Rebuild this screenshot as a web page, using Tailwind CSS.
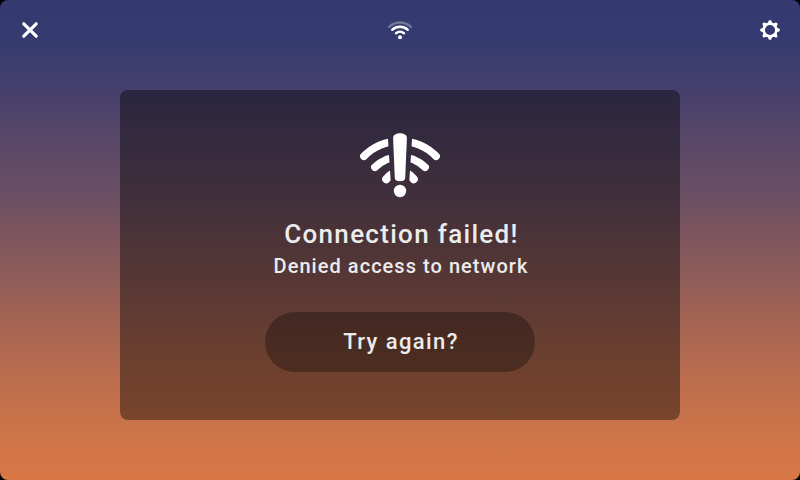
<!DOCTYPE html>
<html lang="en">
<head>
<meta charset="utf-8">
<title>Connection failed</title>
<script src="https://cdn.jsdelivr.net/npm/@tailwindcss/browser@4"></script>
</head>
<body class="bg-black">
<main class="flex h-[480px] w-[800px] flex-col overflow-hidden rounded-[8px] bg-[linear-gradient(#343a70_0px,#353b70_40px,#443f6c_85px,#5a4868_145px,#6b4f64_195px,#7f575e_240px,#965f58_290px,#aa6752_335px,#be6e4d_385px,#cb7449_430px,#d97746_480px)] font-['Roboto','Liberation_Sans',sans-serif] text-[#ececec]">
  <header class="flex h-[60px] items-center justify-between px-[15px]">
    <button aria-label="Close" class="size-[30px]">
      <svg viewBox="0 0 30 30" class="size-[30px]" fill="none" stroke="white" stroke-width="3.2" stroke-linecap="round"><path d="M8.8 8.8 21.2 21.2M21.2 8.8 8.8 21.2"/></svg>
    </button>
    <svg viewBox="0 0 30 30" class="size-[30px]" fill="none" stroke="white" stroke-width="2.4" stroke-linecap="round">
      <path d="M4.2 11.8a15.7 15.7 0 0 1 21.6 0" stroke-opacity=".3"/>
      <path d="M7.2 14.8a11.6 11.6 0 0 1 15.6 0M10.9 18.3a6 6 0 0 1 8.2 0"/>
      <circle cx="15" cy="22.2" r="2" fill="white" stroke="none"/>
    </svg>
    <button aria-label="Settings" class="size-[30px]">
      <svg viewBox="0 0 30 30" class="size-[30px]" fill="none" stroke="white">
        <circle cx="15" cy="15" r="6.3" stroke-width="2.4"/>
        <g fill="white" stroke="none">
          <path id="tooth" d="M12.3 8.8 13.7 5.7Q15 4.1 16.3 5.7L17.7 8.8Z"/>
          <use href="#tooth" transform="rotate(45 15 15)"/><use href="#tooth" transform="rotate(90 15 15)"/><use href="#tooth" transform="rotate(135 15 15)"/><use href="#tooth" transform="rotate(180 15 15)"/><use href="#tooth" transform="rotate(225 15 15)"/><use href="#tooth" transform="rotate(270 15 15)"/><use href="#tooth" transform="rotate(315 15 15)"/>
        </g>
      </svg>
    </button>
  </header>
  <section class="mx-auto mt-[30px] flex h-[330px] w-[560px] flex-col items-center rounded-[8px] bg-black/40 pt-[40px]">
    <svg viewBox="0 0 84 70" class="h-[70px] w-[84px]" fill="none" stroke="white" stroke-width="7.6" stroke-linecap="round">
      <defs><clipPath id="sides"><path d="M0 0H30V9L32.8 53V70H0ZM84 0H54V9L51.2 53V70H84Z"/></clipPath></defs>
      <g clip-path="url(#sides)">
        <path d="M5.9 26.2a51 51 0 0 1 72.2 0M16.9 37.3a35.6 35.6 0 0 1 50.2 0"/>
        <path d="M28.3 49.1Q30.5 46 34 43.9M55.7 49.1Q53.5 46 50 43.9" stroke-width="8.2"/>
      </g>
      <path fill="white" stroke="none" d="M35.1 8C35.1 1.8 48.9 1.8 48.9 8L47.2 48Q46.9 51.2 42 51.2T36.8 48Z"/>
      <circle cx="42" cy="61" r="6.2" fill="white" stroke="none"/>
    </svg>
    <h1 class="mt-[16px] h-[36px] pl-[3px] text-[26px] leading-[36px] font-medium tracking-[1.3px] whitespace-nowrap">Connection failed!</h1>
    <p class="h-[28px] pl-[2px] text-[20px] leading-[28px] font-medium tracking-[1.04px] whitespace-nowrap">Denied access to network</p>
    <button class="mt-[32px] h-[60px] w-[270px] rounded-full bg-black/30 pl-[2px] text-[22px] leading-[60px] font-medium tracking-[1.4px]">Try again?</button>
  </section>
</main>
</body>
</html>
